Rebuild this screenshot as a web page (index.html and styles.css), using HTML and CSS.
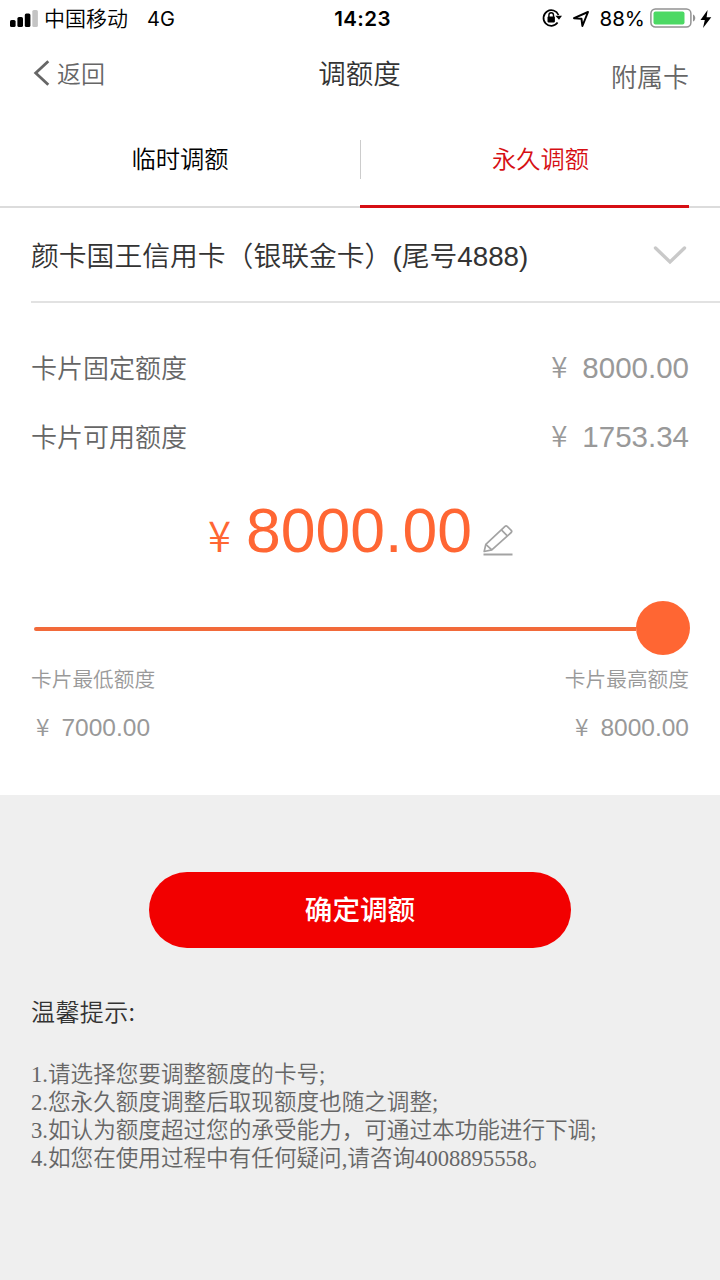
FILE: index.html
```
<!DOCTYPE html>
<html lang="zh-CN">
<head>
<meta charset="utf-8">
<title>调额度</title>
<link rel="stylesheet" href="styles.css">
</head>
<body>
<div class="screen">
  <header class="status">
    <div class="status-left">
      <svg class="signal" width="28" height="18" viewBox="0 0 28 18"><g fill="#000"><rect x="0" y="10" width="5.6" height="7" rx="1.6"/><rect x="7.4" y="7" width="5.6" height="10" rx="1.6"/><rect x="14.8" y="3.4" width="5.6" height="13.6" rx="1.6"/></g><rect x="22.3" y="0" width="5.6" height="17" rx="1.6" fill="#c4c4c4"/></svg>
      <span class="carrier">中国移动</span>
      <span class="network">4G</span>
    </div>
    <time class="clock">14:23</time>
    <div class="status-right">
      <svg class="lock" width="20" height="20" viewBox="0 0 20 20"><path d="M15.6 14.6A7.8 7.8 0 1 1 16.5 7" fill="none" stroke="#000" stroke-width="1.7"/><path d="M13.4 7.8H20l-3 4z"/><rect x="5.5" y="8.6" width="7.4" height="5.8" rx=".8"/><path d="M6.9 9V7a2.3 2.3 0 0 1 4.6 0v2" fill="none" stroke="#000" stroke-width="1.4"/></svg>
      <svg class="arrow" width="18" height="18" viewBox="0 0 18 18"><path d="M2 8.2 16 2l-5.6 14-.9-7.2z" fill="none" stroke="#000" stroke-width="2" stroke-linejoin="round"/></svg>
      <span class="percent">88%</span>
      <svg class="battery" width="46" height="20" viewBox="0 0 46 20"><rect x=".9" y="1" width="40" height="18" rx="4.5" fill="#fff" stroke="#929292" stroke-width="1.5"/><rect x="3.5" y="3.5" width="31" height="13" rx="2" fill="#4cd964"/><path d="M43 6.5c3 1 3 6 0 7z" fill="#929292"/></svg>
      <svg class="bolt" width="12" height="18" viewBox="0 0 12 18"><path d="M7.6 0 .5 10h4.3L3 18 11.3 7.3H6.6z"/></svg>
    </div>
  </header>

  <nav class="navbar">
    <a class="back"><svg width="18" height="28" viewBox="0 0 18 28"><path d="M15.3 2.2 2.7 14l12.6 11.8" fill="none" stroke="#666" stroke-width="2.8"/></svg><span>返回</span></a>
    <h1 class="title">调额度</h1>
    <a class="extra">附属卡</a>
  </nav>

  <div class="tabs">
    <div class="tab">临时调额</div>
    <div class="tab tab-active">永久调额</div>
  </div>

  <div class="card-select">
    <span class="card-name">颜卡国王信用卡（银联金卡）<span class="card-tail">(尾号4888)</span></span>
    <svg class="chevron" width="34" height="20" viewBox="0 0 34 20"><path d="M2.5 3 17 17 31.5 3" fill="none" stroke="#c9c9c9" stroke-width="3.4" stroke-linecap="round"/></svg>
  </div>

  <section class="limits">
    <div class="limit-row"><span class="limit-label">卡片固定额度</span><span class="money"><i>¥</i>8000.00</span></div>
    <div class="limit-row"><span class="limit-label">卡片可用额度</span><span class="money"><i>¥</i>1753.34</span></div>
  </section>

  <div class="amount">
    <i class="amount-sign">¥</i><span class="amount-value">8000.00</span>
    <svg class="pencil" width="30" height="32" viewBox="0 0 30 32"><g fill="none" stroke="#a3a3a3" stroke-width="1.7" stroke-linejoin="round"><path d="M1.2 27.5 2.8 20.4 22 2.3a1.6 1.6 0 0 1 2.2 0l4 4a1.6 1.6 0 0 1 0 2.2L8.8 25.9z"/><path d="m2.8 20.4 6 5.5M18.4 5.9l5.9 6"/></g><path d="M.5 30.5h29" stroke="#a3a3a3" stroke-width="2"/></svg>
  </div>

  <div class="slider"><div class="track"></div><div class="thumb"></div></div>

  <section class="range">
    <div class="range-end"><span>卡片最低额度</span><span class="small-money small-left"><i>¥</i>7000.00</span></div>
    <div class="range-end range-max"><span>卡片最高额度</span><span class="small-money"><i>¥</i>8000.00</span></div>
  </section>

  <footer class="bottom">
    <button class="submit">确定调额</button>
    <h2 class="tips-title">温馨提示:</h2>
    <ol class="tips">
      <li>1.请选择您要调整额度的卡号;</li>
      <li>2.您永久额度调整后取现额度也随之调整;</li>
      <li>3.如认为额度超过您的承受能力，可通过本功能进行下调;</li>
      <li>4.如您在使用过程中有任何疑问,请咨询4008895558。</li>
    </ol>
  </footer>
</div>
</body>
</html>
```
FILE: styles.css
```
* { box-sizing: border-box; }
body { margin: 0; background: #fff; font-family: "Noto Sans CJK SC", sans-serif; font-weight: 350; }
i { font-style: normal; }
svg { display: block; flex: none; }
.screen { width: 720px; height: 1280px; display: flex; flex-direction: column; overflow: hidden; color: #666; white-space: nowrap; }

.status { height: 36px; display: grid; grid-template-columns: 1fr auto 1fr; align-items: center; padding: 0 8px 0 10px; color: #000; font-size: 21px; line-height: 36px; }
.status-left, .status-right { display: flex; align-items: center; }
.status-right { justify-content: flex-end; }
.carrier { margin-left: 6px; line-height: 34px; padding-bottom: 4px; }
.network { margin-left: 19px; font-family: Inter, sans-serif; font-size: 20px; font-weight: 400; line-height: 38px; }
.clock { font-family: Inter, sans-serif; font-size: 20.5px; font-weight: 600; letter-spacing: .4px; padding-left: 3px; line-height: 38px; }
.lock { margin-top: -2px; }
.arrow { margin: -1px 0 0 10px; }
.percent { margin-left: 10px; font-family: Inter, sans-serif; font-size: 20.5px; font-weight: 400; line-height: 38px; }
.battery { margin: -2px 0 0 5px; }
.bolt { margin: -1px 0 0 4px; }

.navbar { height: 74px; display: grid; grid-template-columns: 1fr auto 1fr; padding: 0 31px 0 33px; line-height: 74px; }
.back { display: flex; align-items: center; gap: 6px; height: 74px; font-size: 24px; }
.back svg { margin-top: -1px; }
.back span { line-height: 70px; }
.title { margin: 0 3px 0 0; font-size: 27.5px; font-weight: 350; color: #333; line-height: 72px; }
.extra { text-align: right; font-size: 26px; line-height: 79px; }

.tabs { height: 98px; display: flex; background: linear-gradient(#ccc, #ccc) 360px 30px / 1px 39px no-repeat; border-bottom: 2px solid #dcdcdc; }
.tab { width: 360px; height: 98px; line-height: 96px; text-align: center; font-size: 24.3px; color: #000; }
.tab-active { width: 329px; padding-left: 32px; color: #d60f14; border-bottom: 3px solid #d60f14; }

.card-select { height: 95px; margin-left: 31px; padding-right: 33px; display: flex; align-items: center; justify-content: space-between; border-bottom: 2px solid #e2e2e2; }
.card-name { font-size: 27.8px; line-height: 93px; padding-top: 2px; color: #333; }
.card-tail { font-family: "Liberation Sans", "Noto Sans CJK SC", sans-serif; }
.chevron { margin-top: 1px; }

.limits { padding: 28px 31px 2px; }
.limit-row { height: 69px; line-height: 69px; display: flex; justify-content: space-between; font-size: 26px; }
.limit-label { padding-top: 1px; }
.money { font-family: "Liberation Sans", sans-serif; font-size: 29.5px; font-weight: 400; color: #999; }
.money i { font-family: "Noto Sans CJK SC", sans-serif; font-weight: 350; margin-right: 15px; }

.amount { height: 110px; display: flex; align-items: baseline; padding-left: 208px; color: #ff6633; line-height: 119px; }
.amount-sign { font-size: 42px; }
.amount-value { font-family: "Liberation Sans", sans-serif; font-size: 62.5px; font-weight: 400; margin-left: 15px; }
.pencil { margin-left: 11px; align-self: flex-start; margin-top: 53px; }

.slider { height: 56px; margin: 19px 30px 0 34px; display: flex; align-items: center; }
.track { flex: 1; height: 4px; margin-top: 2px; border-radius: 2px 0 0 2px; background: #f26a3a; }
.thumb { width: 54px; height: 54px; border-radius: 50%; background: #ff6633; }

.range { height: 139px; padding: 0 31px; display: flex; justify-content: space-between; color: #999; font-size: 20.7px; }
.range-end { display: flex; flex-direction: column; line-height: 48px; margin-top: -2px; }
.range-max { align-items: flex-end; }
.small-money { font-family: "Liberation Sans", sans-serif; font-size: 24.5px; font-weight: 400; }
.small-money i { font-family: "Noto Sans CJK SC", sans-serif; font-weight: 350; margin-right: 12px; }
.small-left { padding-left: 5px; }

.bottom { flex: 1; background: #efefef; padding: 77px 31px 0; }
.submit { display: block; width: 422px; height: 76px; margin: 0 auto; padding: 0 0 3px; border: 0; border-radius: 38px; background: #f20000; color: #fff; font: 500 27.6px/73px "Noto Sans CJK SC", sans-serif; }
.tips-title { margin: 43px 0 0; font-size: 24px; font-weight: 350; line-height: 40px; color: #333; letter-spacing: .4px; }
.tips { margin: 30px 0 0; padding: 0; list-style: none; font-family: "Liberation Serif", "Noto Sans CJK SC", serif; font-size: 22.6px; line-height: 28px; }
.tips li { height: 28px; }
```
